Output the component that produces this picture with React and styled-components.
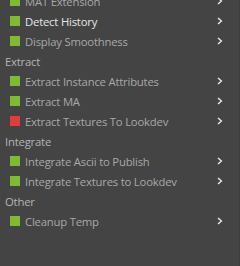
import React from "react";
import styled, { createGlobalStyle } from "styled-components";

const GlobalStyle = createGlobalStyle`
  html, body {
    margin: 0;
    padding: 0;
    background: #444444;
  }
  body {
    font-family: "Open Sans", "DejaVu Sans", sans-serif;
    overflow: hidden;
  }
`;

const sections = [
  {
    title: null,
    items: [
      { label: "MAT Extension", status: "ok" },
      { label: "Detect History", status: "ok", active: true },
      { label: "Display Smoothness", status: "ok" },
    ],
  },
  {
    title: "Extract",
    items: [
      { label: "Extract Instance Attributes", status: "ok" },
      { label: "Extract MA", status: "ok" },
      { label: "Extract Textures To Lookdev", status: "error" },
    ],
  },
  {
    title: "Integrate",
    items: [
      { label: "Integrate Ascii to Publish", status: "ok" },
      { label: "Integrate Textures to Lookdev", status: "ok" },
    ],
  },
  {
    title: "Other",
    items: [{ label: "Cleanup Temp", status: "ok" }],
  },
];

const Panel = styled.div`
  width: 240px;
  height: 266px;
  background: #444444;
  border-right: 1px solid #3e3e3e;
  box-sizing: border-box;
  overflow: hidden;
`;

const List = styled.div`
  display: flex;
  flex-direction: column;
  margin-top: -9px;
`;

const Header = styled.div`
  height: 20px;
  display: flex;
  align-items: center;
  padding-left: 5px;
  font-size: 11.3px;
  letter-spacing: -0.2px;
  color: #b4b4b4;
`;

const Row = styled.div`
  height: 20px;
  display: flex;
  align-items: center;
  padding-left: 10px;
  padding-right: 16px;
`;

const Status = styled.span`
  width: 10px;
  height: 10px;
  flex-shrink: 0;
  background: ${(p) => (p.$status === "error" ? "#e53b3b" : "#7fba2f")};
`;

const Label = styled.span`
  flex: 1;
  margin-left: 5px;
  font-size: 11.3px;
  letter-spacing: -0.2px;
  white-space: nowrap;
  color: ${(p) => (p.$active ? "#e6e6e6" : "#a8a8a8")};
`;

const Chevron = () => (
  <svg width="6" height="8" viewBox="0 0 6 8">
    <path d="M1 1 L4.4 4 L1 7" fill="none" stroke="#e8e8e8" strokeWidth="1.4" />
  </svg>
);

export default function App() {
  return (
    <Panel>
      <GlobalStyle />
      <List>
        {sections.map((s, i) => (
          <React.Fragment key={i}>
            {s.title && <Header>{s.title}</Header>}
            {s.items.map((it) => (
              <Row key={it.label}>
                <Status $status={it.status} />
                <Label $active={it.active}>{it.label}</Label>
                <Chevron />
              </Row>
            ))}
          </React.Fragment>
        ))}
      </List>
    </Panel>
  );
}
